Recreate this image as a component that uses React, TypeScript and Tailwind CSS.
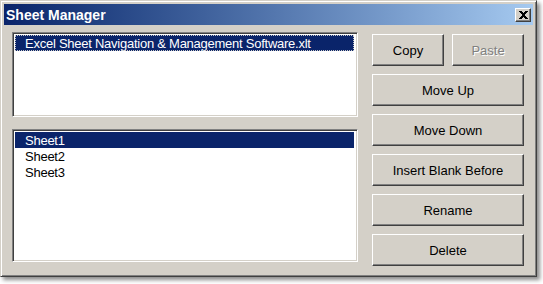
import React from "react";

const font = { fontFamily: '"Liberation Sans", Arial, sans-serif' };

function Btn({ label, disabled, className = "" }: { label: string; disabled?: boolean; className?: string }) {
  return (
    <div
      className={
        "h-[32px] flex items-center justify-center bg-[#d4d0c8] border border-t-white border-l-white border-r-[#404040] border-b-[#404040] shadow-[inset_-1px_-1px_0_#808080] text-[13px] leading-none " +
        className
      }
    >
      {disabled ? (
        <span className="text-[#808080] [text-shadow:1px_1px_0_#ffffff]">{label}</span>
      ) : (
        <span className="text-black">{label}</span>
      )}
    </div>
  );
}

export default function App() {
  return (
    <div className="w-[543px] h-[284px] bg-white" style={font}>
      <div className="w-[537px] h-[277px] bg-[#d4d0c8] border border-t-[#d4d0c8] border-l-[#d4d0c8] border-r-[#404040] border-b-[#404040] shadow-[inset_1px_1px_0_#ffffff,inset_-1px_-1px_0_#808080,3px_3px_4px_rgba(0,0,0,0.45)] p-[3px] flex flex-col">
        {/* Title bar */}
        <div className="h-[21px] flex items-center justify-between bg-linear-to-r from-[#0a246a] to-[#a6caf0] pl-[2px] pr-[2px]">
          <span className="text-white font-bold text-[14px] leading-none">Sheet Manager</span>
          <div className="w-[16px] h-[14px] bg-[#d4d0c8] border border-t-white border-l-white border-r-[#404040] border-b-[#404040] shadow-[inset_-1px_-1px_0_#808080] flex items-center justify-center">
            <svg width="9" height="8" viewBox="0 0 9 8" shapeRendering="crispEdges">
              <path
                fill="#000"
                d="M0 0h3v1h-3zM6 0h3v1h-3zM1 1h3v1h-3zM5 1h3v1h-3zM2 2h5v1h-5zM3 3h3v1h-3zM3 4h3v1h-3zM2 5h5v1h-5zM1 6h3v1h-3zM5 6h3v1h-3zM0 7h3v1h-3zM6 7h3v1h-3z"
              />
            </svg>
          </div>
        </div>
        {/* Content */}
        <div className="flex pl-[8px] pt-[7px]">
          <div className="w-[346px] flex flex-col gap-[12px]">
            <div className="h-[85px] bg-white border border-t-[#808080] border-l-[#808080] border-r-white border-b-white shadow-[inset_1px_1px_0_#404040,inset_-1px_-1px_0_#d4d0c8] p-[2px] pr-[3px] text-[13px] tracking-[-0.25px]">
              <div className="h-[16px] bg-[#0a246a] text-white flex items-center pl-[10px] outline-1 outline-dotted outline-[#c8c8c8] -outline-offset-1 leading-none">
                Excel Sheet Navigation &amp; Management Software.xlt
              </div>
            </div>
            <div className="h-[133px] bg-white border border-t-[#808080] border-l-[#808080] border-r-white border-b-white shadow-[inset_1px_1px_0_#404040,inset_-1px_-1px_0_#d4d0c8] p-[2px] pr-[3px] text-[13px] tracking-[-0.25px] leading-none">
              <div className="h-[16px] bg-[#0a246a] text-white flex items-center pl-[10px]">Sheet1</div>
              <div className="h-[16px] text-black flex items-center pl-[10px]">Sheet2</div>
              <div className="h-[16px] text-black flex items-center pl-[10px]">Sheet3</div>
            </div>
          </div>
          <div className="ml-[14px] pt-[2px] w-[152px] flex flex-col gap-[8px]">
            <div className="flex gap-[8px]">
              <Btn label="Copy" className="w-[72px]" />
              <Btn label="Paste" disabled className="w-[72px]" />
            </div>
            <Btn label="Move Up" />
            <Btn label="Move Down" />
            <Btn label="Insert Blank Before" />
            <Btn label="Rename" />
            <Btn label="Delete" />
          </div>
        </div>
      </div>
    </div>
  );
}
